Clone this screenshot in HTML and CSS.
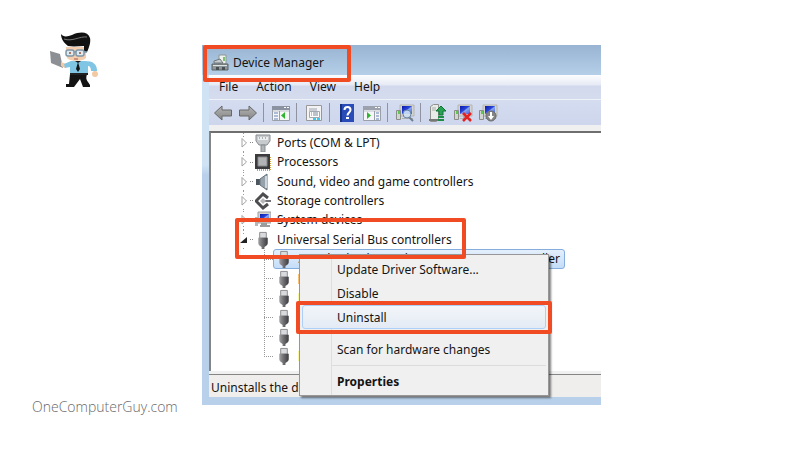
FILE: index.html
```html
<!DOCTYPE html>
<html lang="en">
  <head>
    <meta charset="UTF-8" />
    <meta name="viewport" content="width=device-width, initial-scale=1.0" />
    <title>Device Manager</title>
    <link rel="stylesheet" href="styles.css">
  </head>
  <body>
    <svg class="defs" aria-hidden="true">
      <defs>
        <linearGradient id="metal" x1="0" x2="1" y1="0" y2="0">
          <stop offset="0" stop-color="#a2a2a6" />
          <stop offset="0.4" stop-color="#747477" />
          <stop offset="1" stop-color="#3c3c40" />
        </linearGradient>
        <linearGradient id="screen" x1="0" x2="1" y1="0" y2="1">
          <stop offset="0" stop-color="#0a18a8" />
          <stop offset="0.45" stop-color="#2844d8" />
          <stop offset="0.55" stop-color="#8aa6f0" />
          <stop offset="1" stop-color="#3e5cd8" />
        </linearGradient>
        <linearGradient id="arrow" x1="0" x2="0" y1="0" y2="1">
          <stop offset="0" stop-color="#b4b4b4" />
          <stop offset="1" stop-color="#858585" />
        </linearGradient>
      </defs>
      <symbol id="usb" viewBox="0 0 16 19">
        <path d="M4.500 1.500h7v6h-7z" fill="#d9dadd" stroke="#88888c" />
        <path d="M3 7h10v6c0 2-2 3-3.500 4V19h-3v-2C5 16 3 15 3 13z" fill="url(#metal)" />
      </symbol>
      <symbol id="open" viewBox="0 0 10 12">
        <path d="M3 1.500v8.500L7.500 6z" fill="#fff" stroke="#a2a2a2" />
      </symbol>
      <symbol id="pc" viewBox="0 0 20 18">
        <path d="M5 1h14v11H5z" fill="#d4d4d0" stroke="#b4b4b0" />
        <path d="M7 2h10v8H7z" fill="url(#screen)" />
        <path d="M10 12h5v2h3v1H7v-1h3z" fill="#aeb0b0" />
        <path d="M1.500 6.500h4v9h-4z" fill="#d2d4d2" stroke="#8b8d8b" />
        <path d="M3 7h2v3H3z" fill="#60c850" />
      </symbol>
    </svg>
    <main class="page">
      <aside class="brand">
        <svg class="mascot" viewBox="0 0 52 58" role="img" aria-label="One Computer Guy">
          <path d="M20 44h17c-1 4-1 5 1 8l2 3v2h-7l-3-8-6 8h-8v-3h3z" fill="#141414" />
          <path d="M0 21l10 3 3 14-12-5z" fill="#8c8f93" />
          <path d="M11 32l5 2-1 4-4-2z" fill="#f3c9a4" />
          <path d="M14 34l7-3h14c8 0 12 3 12 10h-6c0-3-1-5-3-5v9H20v-8l-5 1z" fill="#80c6e4" />
          <circle cx="45" cy="44" r="3" fill="#f3c9a4" />
          <path d="M20 43h18v2H20z" fill="#222" />
          <path d="M25 31h6l-3 2zM28 32l2 7-2 3-2-3z" fill="#141414" />
          <path d="M16 17h20v11c-2 3-14 4-18 1-2-2-2-6-2-12z" fill="#f5ceb0" />
          <path d="M34 18c3-1 4 4 0 6z" fill="#f0bc97" />
          <path d="M11 4c2 3 6 3 11 1C31 1 38 2 40 8c1 4-1 10-3 14l-3-1v-5c-5 0-10 1-16 0-4-3-7-7-7-12z" fill="#111" />
          <path d="M14 9c8 3 16-3 23-2" fill="none" stroke="#777" stroke-width="1" />
          <g fill="#dceaf0" stroke="#7f97a8" stroke-width="1.500">
            <rect x="16" y="20" width="8" height="6" rx="2" />
            <rect x="26" y="20" width="8" height="6" rx="2" />
            <path d="M24 22h2M34 22h3" />
          </g>
          <circle cx="20" cy="23" r="1" fill="#9c5138" />
          <circle cx="30" cy="23" r="1" fill="#9c5138" />
          <path d="M24 29h4" stroke="#a55842" />
        </svg>
        <a class="site" href="#">OneComputerGuy.com</a>
      </aside>

      <section class="window">
        <header class="titlebar">
          <svg class="title-icon" viewBox="0 0 18 18" aria-hidden="true">
            <path d="M8 1h7v9H8z" fill="#eef1ec" stroke="#8c9692" />
            <path d="M12 3h2v4h-2z" fill="#7cc071" />
            <path d="M3 7l6-2 3 4H3z" fill="#c6cbcd" stroke="#70777b" />
            <path d="M1 10h16v6H1z" fill="#8e9699" stroke="#5d6467" />
            <path d="M2 11h14v1H2z" fill="#dfe3e4" />
            <path d="M5 13h3v3H5zM11 13h3v3h-3z" fill="#495054" />
          </svg>
          <h1>Device Manager</h1>
        </header>
        <div class="frame">
          <nav class="menubar">
            <button>File</button>
            <button>Action</button>
            <button>View</button>
            <button>Help</button>
          </nav>
          <div class="toolbar">
            <button aria-label="Back">
              <svg viewBox="0 0 20 18"><path d="M1.500 9L9 2v4h9.500v6H9v4z" fill="url(#arrow)" stroke="#686868" /></svg>
            </button>
            <button aria-label="Forward">
              <svg viewBox="0 0 20 18"><path d="M18.500 9L11 2v4H1.500v6H11v4z" fill="url(#arrow)" stroke="#686868" /></svg>
            </button>
            <i class="sep"></i>
            <button aria-label="Show console tree">
              <svg viewBox="0 0 20 18">
                <path d="M1.500 2.500h17v14h-17z" fill="#f5f6f8" stroke="#9a9fa8" />
                <path d="M1 2h18v4H1z" fill="#8b93a3" />
                <path d="M13 3h2v1h-2zM16 3h2v1h-2z" fill="#fff" />
                <path d="M2 7h16" stroke="#c0c4cc" />
                <path d="M3 9h4M3 12h4M3 15h4" stroke="#6480b4" />
                <path d="M8.500 7v9" stroke="#9a9fa8" />
                <path d="M14 8v7l-4-3.500z" fill="#2fb52b" />
              </svg>
            </button>
            <i class="sep"></i>
            <button aria-label="Properties">
              <svg viewBox="0 0 20 18">
                <path d="M2.500 1.500h15v15h-15z" fill="#f3f3f3" stroke="#989898" />
                <path d="M5.500 7.500h10v6h-10z" fill="#fff" stroke="#a4a9b0" />
                <path d="M5 4h8v3H5z" fill="#c8ccd2" />
                <path d="M7 9h1M9 9h5M7 11h1M9 11h5" stroke="#7b8796" />
                <path d="M9 15h3M13 15h3" stroke="#31cdf3" stroke-width="2" />
              </svg>
            </button>
            <i class="sep"></i>
            <button aria-label="Help">
              <svg viewBox="0 0 20 18">
                <path d="M3 0h14v18H3z" fill="#2a4cb8" />
                <path d="M3 0h2v18H3z" fill="#16327f" />
                <path d="M7.500 6c0-4 6-4 6 0 0 2.500-3 2.500-3 5.500" fill="none" stroke="#fff" stroke-width="2" />
                <path d="M9 13h3v2H9z" fill="#fff" />
              </svg>
            </button>
            <button aria-label="Show action pane">
              <svg viewBox="0 0 20 18">
                <path d="M1.500 2.500h17v14h-17z" fill="#f5f6f8" stroke="#9a9fa8" />
                <path d="M1 2h18v4H1z" fill="#9ba1ad" />
                <path d="M13 3h2v1h-2zM16 3h2v1h-2z" fill="#fff" />
                <path d="M2 7h16" stroke="#c0c4cc" />
                <path d="M14 9h3M14 12h3M14 15h3" stroke="#6480b4" />
                <path d="M12.500 7v9" stroke="#9a9fa8" />
                <path d="M5 8v7l4-3.500z" fill="#2fb52b" />
              </svg>
            </button>
            <i class="sep"></i>
            <button aria-label="Scan for hardware changes">
              <svg viewBox="0 0 20 18">
                <use href="#pc" />
                <path d="M14 13l4 4" stroke="#6d7f93" stroke-width="2" />
                <circle cx="12" cy="10" r="4" fill="#cfe4f6" fill-opacity="0.800" stroke="#6b86a3" />
              </svg>
            </button>
            <i class="sep"></i>
            <button aria-label="Update driver software">
              <svg viewBox="0 0 20 18">
                <path d="M2.500 2.500l3-2h5v15l-2 2h-6z" fill="#e9ebe8" stroke="#8e918d" />
                <path d="M4 4h4M4 6h4" stroke="#a8aba7" />
                <path d="M1 16h9" stroke="#777" stroke-width="2" />
                <path d="M13 2l5 5h-3v4h-4V7H8z" fill="#27a352" stroke="#147239" />
                <path d="M10 13h6M10 16h6" stroke="#1d8d45" stroke-width="2" />
              </svg>
            </button>
            <button aria-label="Uninstall">
              <svg viewBox="0 0 20 18">
                <use href="#pc" />
                <path d="M10 9l8 8M18 9l-8 8" stroke="#e32222" stroke-width="2.500" />
              </svg>
            </button>
            <button aria-label="Disable">
              <svg viewBox="0 0 20 18">
                <use href="#pc" />
                <circle cx="13" cy="12" r="5" fill="#858585" stroke="#6a6a6a" />
                <path d="M12 8h2v4h2l-3 4-3-4h2z" fill="#fff" />
              </svg>
            </button>
          </div>

          <ul class="tree">
            <li class="row">
              <svg class="expander" viewBox="0 0 10 12"><use href="#open" /></svg>
              <i class="dots"></i>
              <svg class="icon" viewBox="0 0 16 18">
                <path d="M1 1h14v6l-3 4H4L1 7z" fill="#c7cbce" stroke="#878c90" />
                <path d="M3 3h10v3H3z" fill="#eceeef" />
                <path d="M4 4h1M7 4h1M10 4h1" stroke="#6f7478" />
                <path d="M6 11h4v7H6z" fill="#b0b5b8" stroke="#878c90" />
              </svg>
              <span>Ports (COM &amp; LPT)</span>
            </li>
            <li class="row">
              <svg class="expander" viewBox="0 0 10 12"><use href="#open" /></svg>
              <i class="dots"></i>
              <svg class="icon" viewBox="0 0 16 18">
                <path d="M2 17h14V4" fill="none" stroke="#d6a23a" stroke-width="2" stroke-dasharray="1 1" />
                <path d="M0 1h15v15H0z" fill="#3c3c3e" />
                <path d="M3 4h9v9H3z" fill="#b2b4b6" stroke="#88898c" />
              </svg>
              <span>Processors</span>
            </li>
            <li class="row">
              <svg class="expander" viewBox="0 0 10 12"><use href="#open" /></svg>
              <i class="dots"></i>
              <svg class="icon" viewBox="0 0 16 18">
                <path d="M1 6h4v6H1z" fill="#4c565f" />
                <path d="M5 6l7-5v16l-7-5z" fill="#95a1ab" stroke="#66727c" />
                <path d="M10 3h2v12h-2z" fill="#cdd6dc" />
              </svg>
              <span>Sound, video and game controllers</span>
            </li>
            <li class="row">
              <svg class="expander" viewBox="0 0 10 12"><use href="#open" /></svg>
              <i class="dots"></i>
              <svg class="icon" viewBox="0 0 16 18">
                <path d="M13 6L8 2 1 9l7 7 5-4" fill="none" stroke="#4d4d50" stroke-width="3" />
                <path d="M7 9h9" stroke="#737377" stroke-width="2" />
                <path d="M8 6l3 3-3 3-3-3z" fill="#b7b7ba" />
              </svg>
              <span>Storage controllers</span>
            </li>
            <li class="row">
              <svg class="expander" viewBox="0 0 10 12"><use href="#open" /></svg>
              <i class="dots"></i>
              <svg class="icon" viewBox="0 0 16 18">
                <path d="M3 1h13v11H3z" fill="#d4d4d0" stroke="#9c9c9c" />
                <path d="M5 3h9v7H5z" fill="url(#screen)" />
                <path d="M6 12h6v2h3v2H5v-2h1z" fill="#9a9c9e" />
                <path d="M0 6h3v9H0z" fill="#b4b6b8" />
              </svg>
              <span>System devices</span>
            </li>
            <li class="row">
              <svg class="expander" viewBox="0 0 10 12"><path d="M8 3v6H1z" fill="#222" /></svg>
              <i class="dots"></i>
              <svg class="icon" viewBox="0 0 16 19"><use href="#usb" /></svg>
              <span>Universal Serial Bus controllers</span>
            </li>
            <li class="branch">
              <ul class="devices">
                <li class="device">
                  <span class="label selected">
                    <svg class="icon" viewBox="0 0 16 19"><use href="#usb" /></svg>
                    <span>Standard Enhanced PCI to USB Host Controller</span>
                  </span>
                </li>
                <li class="device"><span class="label"><svg class="icon" viewBox="0 0 16 19"><use href="#usb" /></svg><i class="mark orange"></i></span></li>
                <li class="device"><span class="label"><svg class="icon" viewBox="0 0 16 19"><use href="#usb" /></svg><i class="mark"></i></span></li>
                <li class="device"><span class="label"><svg class="icon" viewBox="0 0 16 19"><use href="#usb" /></svg></span></li>
                <li class="device"><span class="label"><svg class="icon" viewBox="0 0 16 19"><use href="#usb" /></svg></span></li>
                <li class="device"><span class="label"><svg class="icon" viewBox="0 0 16 19"><use href="#usb" /></svg><i class="mark"></i></span></li>
              </ul>
            </li>
          </ul>
          <footer class="status">Uninstalls the driver for the selected device.</footer>
        </div>

        <div class="context">
          <button>Update Driver Software...</button>
          <button>Disable</button>
          <button class="active">Uninstall</button>
          <hr />
          <button>Scan for hardware changes</button>
          <hr />
          <button class="default">Properties</button>
        </div>

        <div class="callout callout-title"></div>
        <div class="callout callout-usb"></div>
        <div class="callout callout-uninstall"></div>
      </section>
    </main>
  </body>
</html>
```
FILE: styles.css
```css
* {
  margin: 0;
  padding: 0;
  box-sizing: border-box;
}
body {
  background: #fff;
  color: #141414;
  font: 12px/18px "Noto Sans", "Open Sans", sans-serif;
}
ul {
  list-style: none;
}
button {
  border: none;
  background: none;
  color: inherit;
  font: inherit;
}
svg {
  display: block;
  flex: none;
}
.defs {
  position: absolute;
  width: 0;
  height: 0;
}
.page {
  display: grid;
  grid-template-columns: 202px minmax(0, 1fr) 199px;
  min-height: 100vh;
  padding: 30px 0;
}

/* left column */
.brand {
  display: flex;
  flex-direction: column;
  justify-content: space-between;
  padding-left: 32px;
}
.mascot {
  width: 52px;
  height: 58px;
  margin-left: 18px;
}
.site {
  color: #68696c;
  font: 300 14px/26px "Open Sans", sans-serif;
  text-decoration: none;
}

/* window */
.window {
  position: relative;
  align-self: start;
  margin-top: 15px;
  background: linear-gradient(#cfe3f5 120px, #b8d0ea 130px);
  white-space: nowrap;
}
.titlebar {
  display: flex;
  align-items: center;
  gap: 4px;
  height: 30px;
  padding: 6px 9px 0;
  background: linear-gradient(#98b4d2, #b5cfe8);
}
.title-icon {
  width: 18px;
  height: 18px;
}
.titlebar h1 {
  font-size: 12px;
  font-weight: normal;
}
.frame {
  margin-left: 7px;
  padding-bottom: 8px;
  background: linear-gradient(#f0f0f0, #f0f0f0) 0 0 / 100% 322px no-repeat;
}
.menubar {
  display: flex;
  gap: 18px;
  height: 24px;
  padding: 0 10px;
  background: linear-gradient(#fdfdfe, #e6eaf5 10px, #d2d9ec 11px, #d5dcee);
}
.toolbar {
  display: flex;
  align-items: center;
  gap: 5px;
  height: 26px;
  border-top: 1px solid #eef1f8;
  padding: 0 4px;
  background: linear-gradient(#d4dcf0, #cdd6ec);
}
.toolbar svg {
  width: 20px;
  height: 18px;
}
.sep {
  width: 1px;
  height: 19px;
  margin-right: 2px;
  background: #8e939f;
}

/* device tree */
.tree {
  display: flex;
  flex-direction: column;
  height: 240px;
  margin: 6px 0 3px;
  padding-bottom: 5px;
  border: solid #858585;
  border-width: 2px 0 0 2px;
  border-top-color: #6f6f6f;
  background: #fff;
}
.row {
  display: flex;
  flex: 1;
  align-items: center;
  min-height: 0;
  padding-left: 28px;
  background: repeating-linear-gradient(#999 0 1px, transparent 1px 3px) 32px 0 / 1px 100% no-repeat;
}
.expander {
  width: 10px;
  height: 12px;
  background: #fff;
}
.dots {
  width: 4px;
  height: 1px;
  margin: 0 1px;
  background: repeating-linear-gradient(90deg, #888 0 1px, transparent 1px 2px);
}
.icon {
  width: 16px;
  height: 18px;
  margin-right: 6px;
}
.branch {
  flex: 6;
  min-height: 0;
}
.devices {
  display: flex;
  flex-direction: column;
  height: 100%;
  margin-left: 53px;
  background: repeating-linear-gradient(#999 0 1px, transparent 1px 2px) 0 0 / 1px 92% no-repeat;
}
.device {
  display: flex;
  flex: 1;
  align-items: center;
  min-height: 0;
}
.device::before {
  width: 9px;
  height: 1px;
  background: repeating-linear-gradient(90deg, #999 0 1px, transparent 1px 2px);
  content: "";
}
.label {
  display: flex;
  align-items: center;
  height: 20px;
  padding: 0 4px 0 2px;
  border: 1px solid transparent;
}
.selected {
  border-color: #84acdd;
  border-radius: 3px;
  background: linear-gradient(#e4effc, #c5ddf8);
}
.mark {
  width: 2px;
  height: 10px;
  background: #fbf7a0;
}
.orange {
  background: #fbc277;
}
.status {
  height: 23px;
  padding: 4px 2px 0;
  border-top: 1px solid #858585;
  background: #f0eded;
}

/* context menu */
.context {
  position: absolute;
  top: 209px;
  left: 97px;
  display: flex;
  flex-direction: column;
  width: 250px;
  padding: 2px;
  border: 1px solid #979797;
  background: linear-gradient(90deg, #f0f0f0 31px, #dedede 31px 32px, #f0f0f0 32px);
  box-shadow: 2px 2px 2px rgba(0, 0, 0, 0.5);
}
.context button {
  height: 24px;
  padding: 1px 0 0 34px;
  border: 1px solid transparent;
  border-radius: 3px;
  text-align: left;
}
.context .active {
  border-color: #aecff7;
  background: linear-gradient(#f2f5f9, #e4ebf5);
}
.context .default {
  font-weight: bold;
}
.context hr {
  height: 1px;
  margin: 4px 0 3px 30px;
  border: none;
  background: #dcdcdc;
}

/* highlight boxes */
.callout {
  position: absolute;
  border: 4px solid #f04b23;
  border-radius: 2px;
  pointer-events: none;
}
.callout-title {
  top: 0;
  left: 1px;
  width: 148px;
  height: 37px;
}
.callout-usb {
  top: 173px;
  left: 33px;
  width: 231px;
  height: 41px;
}
.callout-uninstall {
  top: 256px;
  left: 94px;
  width: 256px;
  height: 33px;
}
```
